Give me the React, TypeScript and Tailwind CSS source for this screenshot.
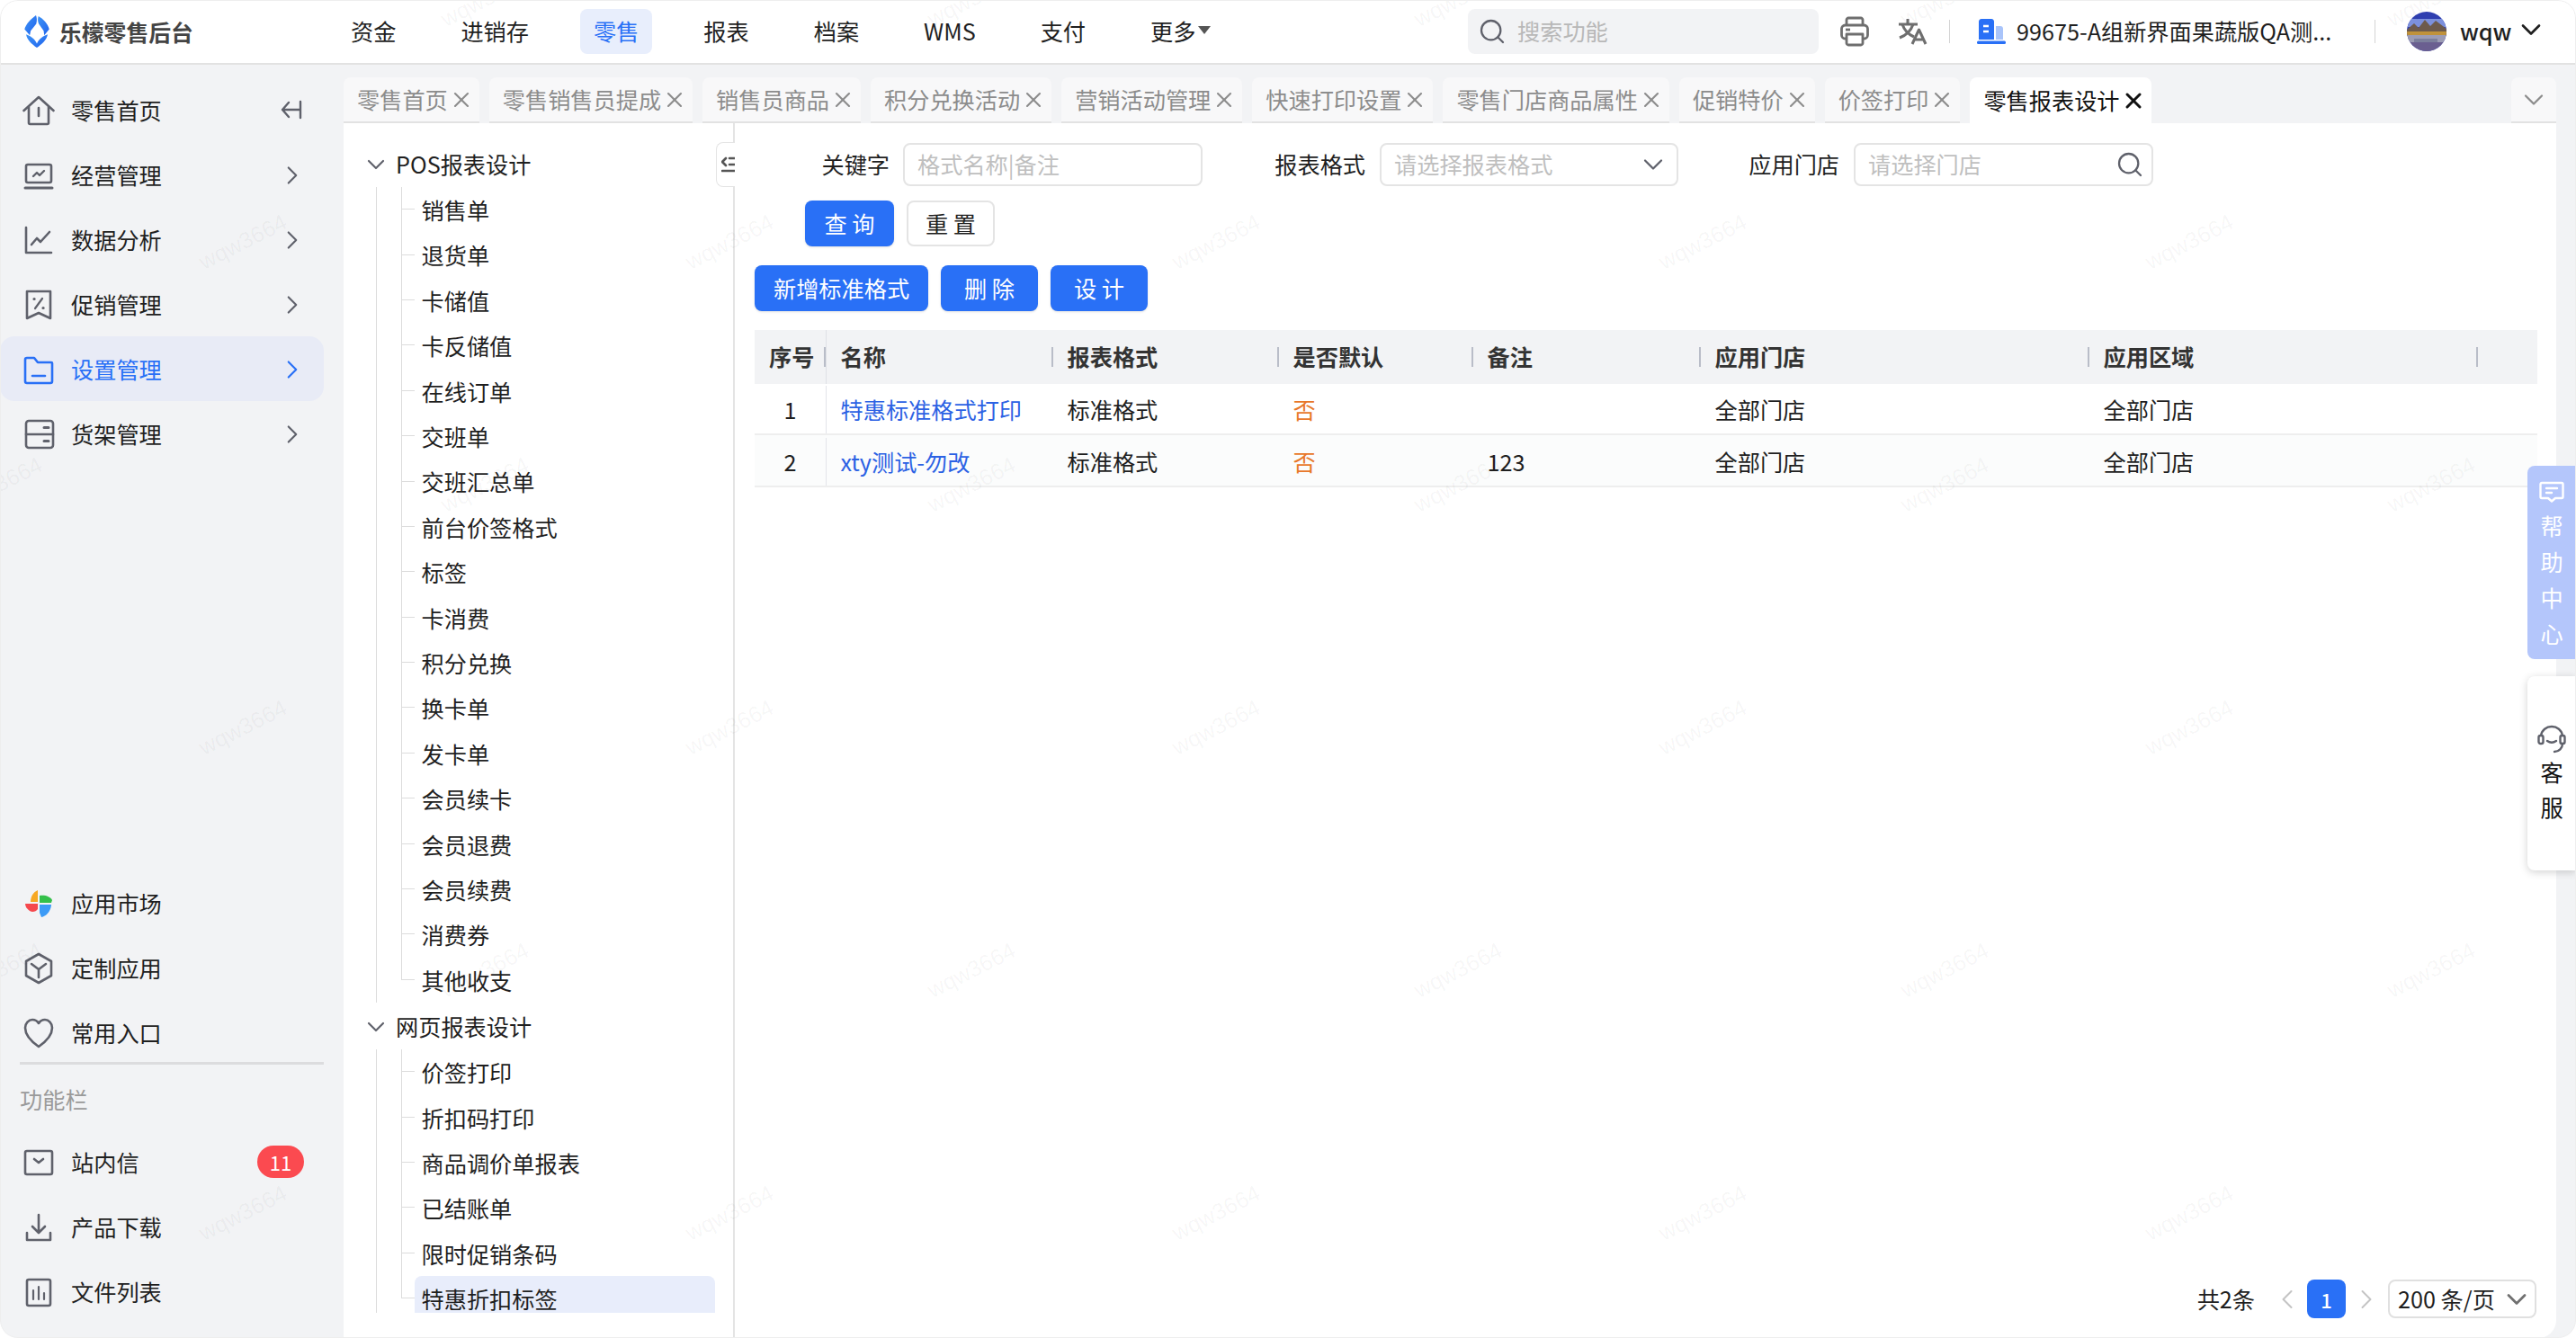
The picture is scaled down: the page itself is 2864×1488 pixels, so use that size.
import React from "react";
import { ChevronDown, ChevronLeft, ChevronRight, Search, X } from "lucide-react";

const tabs = [
  "零售首页",
  "零售销售员提成",
  "销售员商品",
  "积分兑换活动",
  "营销活动管理",
  "快速打印设置",
  "零售门店商品属性",
  "促销特价",
  "价签打印",
];

const posItems = [
  "销售单", "退货单", "卡储值", "卡反储值", "在线订单", "交班单", "交班汇总单", "前台价签格式", "标签",
  "卡消费", "积分兑换", "换卡单", "发卡单", "会员续卡", "会员退费", "会员续费", "消费券", "其他收支",
];
const webItems = ["价签打印", "折扣码打印", "商品调价单报表", "已结账单", "限时促销条码", "特惠折扣标签"];

const navItems = ["资金", "进销存", "零售", "报表", "档案", "WMS", "支付"];

const columns = ["名称", "报表格式", "是否默认", "备注", "应用门店", "应用区域", ""];
const rows = [
  { no: "1", name: "特惠标准格式打印", format: "标准格式", isDefault: "否", remark: "", store: "全部门店", area: "全部门店" },
  { no: "2", name: "xty测试-勿改", format: "标准格式", isDefault: "否", remark: "123", store: "全部门店", area: "全部门店" },
];

const grid = "grid grid-cols-[80px_252px_251px_216px_253px_432px_432px_66px]";

function Ico({ color = "#5f616b", children }: { color?: string; children: React.ReactNode }) {
  return (
    <svg width="36" height="36" viewBox="0 0 36 36" fill="none" stroke={color} strokeWidth="2.6" strokeLinecap="round" strokeLinejoin="round" className="shrink-0">
      {children}
    </svg>
  );
}

const HomeIcon = () => (
  <Ico>
    <path d="M1.5 18 18 3l16.5 15" />
    <path d="M7 14v17.5c0 .8.7 1.5 1.5 1.5h19c.8 0 1.500-.7 1.500-1.500V14" />
    <path d="M18 15v9" />
  </Ico>
);
const MonitorIcon = () => (
  <Ico>
    <rect x="4" y="6" width="28" height="20" rx="2" />
    <path d="M3 32h30" strokeWidth="3" />
    <path d="m12 19 4-4 3 3 5-5" strokeWidth="2.4" />
  </Ico>
);
const ChartIcon = () => (
  <Ico>
    <path d="M4 4v28h28" />
    <path d="m10 23 6-7 4 4 10-11" />
  </Ico>
);
const PromoIcon = () => (
  <Ico>
    <path d="M5 3h26v30l-13-6-13 6z" />
    <path d="m22 11-8 11" strokeWidth="2.200" />
    <path d="M13 11.500h.1M23 21.500h.1" strokeWidth="3.200" />
  </Ico>
);
const FolderIcon = () => (
  <Ico color="#2970f6">
    <path d="M3 7c0-1 .8-2 2-2h8l4 5h15c.6 0 1 .5 1 1v20c0 1-.8 2-2 2H5c-1.200 0-2-.8-2-2z" />
    <path d="M11 25h14" />
  </Ico>
);
const ShelfIcon = () => (
  <Ico>
    <rect x="4" y="3" width="30" height="30" rx="3" />
    <path d="M4 18h30" />
    <path d="M24 10.500h5M24 25.500h5" strokeWidth="3" />
  </Ico>
);
const MarketIcon = () => (
  <svg width="32" height="32" viewBox="0 0 32 32" className="shrink-0">
    <path d="M15 1C10 3 7 8 7 14h8z" fill="#f7a823" />
    <path d="M17 7c6-1 12 1 14 5l-1 3H17z" fill="#34c04a" />
    <path d="M1 16h14v6c-2 3-6 4-9 2-3-2-5-5-5-8z" fill="#f5484d" />
    <path d="M17 17h13c0 6-5 13-11 14l-2-5z" fill="#3d9bf6" />
  </svg>
);
const CubeIcon = () => (
  <Ico>
    <path d="M18 2 32 10v16l-14 8-14-8V10z" />
    <path d="m10 13 8 6 8-6M18 19v9" />
  </Ico>
);
const HeartIcon = () => (
  <Ico>
    <path d="M18 33C8 26 3 20 3 12c0-5 4-9 8-9 3 0 5.500 1.500 7 4 1.500-2.500 4-4 7-4 4 0 8 4 8 9 0 8-5 14-15 21z" />
  </Ico>
);
const InboxIcon = () => (
  <Ico>
    <rect x="3" y="5" width="30" height="26" rx="2" />
    <path d="m13 14 5 4 5-4" />
  </Ico>
);
const DownloadIcon = () => (
  <Ico>
    <path d="M18 4v19M11 17l7 7 7-7" />
    <path d="M5 24v8h26v-8" />
  </Ico>
);
const FileBarsIcon = () => (
  <Ico>
    <rect x="5" y="4" width="26" height="29" rx="2" />
    <path d="M12 16v10M18 12v14M24 19v7" strokeWidth="2.200" />
  </Ico>
);

const SideRow = ({ icon, label, arrow, active, badge }: { icon: React.ReactNode; label: string; arrow?: boolean; active?: boolean; badge?: string }) => (
  <div className={`h-[72px] w-[360px] flex items-center pl-[25px] pt-[2px] rounded-2xl ${active ? "bg-[#e8ebf6] text-[#2970f6]" : "text-[#1f1f1f]"}`}>
    {icon}
    <span className="ml-[18px]">{label}</span>
    {arrow && <ChevronRight className={`ml-auto mr-[18px] w-[34px] h-[34px] ${active ? "text-[#2970f6]" : "text-[#5f616b]"}`} strokeWidth={1.500} />}
    {badge && <span className="ml-auto mr-[22px] -mt-[2px] w-[52px] h-[36px] rounded-full bg-[#fb4a50] text-white text-[22px] flex items-center justify-center">{badge}</span>}
  </div>
);

function TreeGroup({ title, items, selected }: { title: string; items: string[]; selected?: string }) {
  return (
    <div>
      <div className="h-[50px] flex items-center pl-[20px] mt-[2px]">
        <ChevronDown className="w-[32px] h-[32px] text-[#5f616b]" strokeWidth={1.600} />
        <span className="ml-[6px]">{title}</span>
      </div>
      <div className="ml-[36px] pl-[27px] border-l border-[#dcdcdc]">
        {items.map((t, i) => (
          <div key={t} className="h-[50.4px] flex items-stretch">
            <div className="w-[15px] flex flex-col shrink-0">
              <div className="h-1/2 border-l border-b border-[#dcdcdc]" />
              {i < items.length - 1 && <div className="h-1/2 border-l border-[#dcdcdc]" />}
            </div>
            <div className={`w-[334px] pl-[7.500px] pt-[1px] rounded-t-lg flex items-center ${t === selected ? "bg-[#e8edfb]" : ""}`}>{t}</div>
          </div>
        ))}
      </div>
    </div>
  );
}

function Field({ label, labelW, gap, inputW, placeholder, right }: { label: string; labelW: string; gap: string; inputW: string; placeholder: string; right?: React.ReactNode }) {
  return (
    <div className="flex items-center">
      <span className={`${labelW} text-right`}>{label}</span>
      <div className={`${gap} ${inputW} h-[48px] border-2 border-[#e4e4e4] rounded-lg flex items-center pl-[14px] pr-[8px] text-[#bfbfbf]`}>
        <span>{placeholder}</span>
        {right}
      </div>
    </div>
  );
}

const Logo = () => (
  <svg width="28" height="36" viewBox="0 0 80 105" className="shrink-0">
    <defs>
      <linearGradient id="lg1" x1="0" y1="0" x2="1" y2="1">
        <stop offset="0" stopColor="#3f94f5" />
        <stop offset="1" stopColor="#1f63ee" />
      </linearGradient>
    </defs>
    <path d="M37 0C20 12 4 30 0 45l17 20 3-15 18-22c3-12 2-20-1-28z" fill="url(#lg1)" />
    <path d="M45 3c-3 9-2 17 1 25l16 22 2 15 16-20C76 28 60 11 45 3z" fill="url(#lg1)" />
    <path d="M5 62c3 18 20 33 35 43 15-10 32-25 35-43-14 5-28 14-35 30-7-16-21-25-35-30z" fill="url(#lg1)" />
  </svg>
);

const Avatar = () => (
  <svg width="44" height="44" viewBox="0 0 44 44" className="shrink-0 rounded-full">
    <rect width="44" height="44" fill="#2f3fb0" />
    <rect y="8" width="44" height="9" fill="#7c90dc" />
    <path d="M0 20 8 13l5 5 7-9 6 7 6-6 12 9v8H0z" fill="#6d5a4c" />
    <rect y="22" width="44" height="4" fill="#c0923a" />
    <rect y="26" width="44" height="8" fill="#9c9cb4" />
    <rect y="30" x="8" width="26" height="4" fill="#7b7f9c" />
    <rect y="34" width="44" height="10" fill="#6a5f90" />
  </svg>
);

export default function App() {
  const wm: { x: number; y: number }[] = [];
  [-2, 268, 538, 808, 1078, 1348].forEach((y, r) => {
    for (let k = 0; k < 6; k++) wm.push({ x: (r % 2 === 0 ? -3 : 269) + 541 * k, y });
  });

  return (
    <div className="relative w-[2864px] h-[1488px] overflow-hidden rounded-[20px] bg-[#f2f3f5] flex flex-col text-[25.2px] leading-none text-[#1f1f1f] font-['Noto_Sans_CJK_SC',sans-serif]">
      {/* top bar */}
      <header className="h-[72px] shrink-0 bg-white border-b-2 border-[#e2e2e2] flex items-center">
        <div className="ml-[27px] flex items-center">
          <Logo />
          <span className="ml-[11px] w-[150px] text-[24.8px] font-bold text-[#444444] whitespace-nowrap">乐檬零售后台</span>
        </div>
        <nav className="ml-[159px] flex items-center gap-[42px]">
          {navItems.map((n) => (
            <div key={n} className={`h-[50px] px-[15px] rounded-lg flex items-center ${n === "零售" ? "bg-[#e8eefc] text-[#2970f6]" : ""}`}>
              {n}
            </div>
          ))}
          <div className="h-[50px] px-[15px] flex items-center">
            更多
            <svg width="14" height="10" viewBox="0 0 14 10" className="ml-[3px] -mt-[4px]">
              <path d="M0 1h14L7 10z" fill="#555555" />
            </svg>
          </div>
        </nav>
        <div className="ml-auto pr-[32px] flex items-center">
          <div className="w-[390px] h-[50px] rounded-lg bg-[#f2f3f5] flex items-center pl-[11px] text-[#b8b8b8]">
            <Search className="w-[32px] h-[32px] text-[#5f616b]" strokeWidth={1.700} />
            <span className="ml-[12px]">搜索功能</span>
          </div>
          <svg width="32" height="34" viewBox="0 0 32 34" fill="none" stroke="#6e6e6e" strokeWidth="2.800" strokeLinejoin="round" className="ml-[24px]">
            <path d="M7 10V4c0-1 1-2 2-2h14c1 0 2 1 2 2v6" />
            <rect x="1.500" y="10" width="29" height="15" rx="4" />
            <path d="M7 20h18v10c0 1-1 2-2 2H9c-1 0-2-1-2-2z" fill="#ffffff" />
            <path d="M6 15h5" />
          </svg>
          <svg width="32" height="30" viewBox="0 0 32 30" fill="none" stroke="#6e6e6e" strokeWidth="3" strokeLinejoin="round" className="ml-[33px]">
            <path d="M0 7h21M10 1v6" />
            <path d="M4 7c2 6 6 11 13 14M16 7c-2 6-7 12-15 15" />
            <path d="m15 29 7.500-16L30 29M17.500 24h10" />
          </svg>
          <span className="ml-[24px] w-[1px] h-[26px] bg-[#d4d4d4]" />
          <svg width="32" height="28" viewBox="0 0 32 28" className="ml-[30px]">
            <path d="M2 3c0-1.500 1-3 3-3h11c2 0 3 1.500 3 3v20H2z" fill="#2970f6" />
            <path d="M7 8h6M7 14h6" stroke="#ffffff" strokeWidth="2.400" />
            <path d="M21 8h5c2 0 3 1 3 3v12h-8z" fill="#a9c4fa" />
            <rect y="24.500" width="32" height="3.500" rx="1.500" fill="#2970f6" />
          </svg>
          <span className="ml-[12px] w-[347px] whitespace-nowrap">99675-A组新界面果蔬版QA测...</span>
          <span className="ml-[51px] w-[1px] h-[26px] bg-[#d4d4d4]" />
          <div className="ml-[35px]">
            <Avatar />
          </div>
          <span className="ml-[15px] w-[52px] font-medium">wqw</span>
          <ChevronDown className="ml-[9px] w-[36px] h-[36px] -mt-[4px]" strokeWidth={1.800} />
        </div>
      </header>

      <div className="flex flex-1 min-h-0">
        {/* side menu */}
        <aside className="w-[382px] shrink-0 flex flex-col pt-[14px] pb-[16px]">
          <div className="relative">
            <SideRow icon={<HomeIcon />} label="零售首页" />
            <svg width="24" height="22" viewBox="0 0 24 22" fill="none" stroke="#5f616b" strokeWidth="2.400" strokeLinecap="round" strokeLinejoin="round" className="absolute left-[312px] top-[25px]">
              <path d="M9 3 2 11l7 8M2 11h20M22 2v18" />
            </svg>
          </div>
          <SideRow icon={<MonitorIcon />} label="经营管理" arrow />
          <SideRow icon={<ChartIcon />} label="数据分析" arrow />
          <SideRow icon={<PromoIcon />} label="促销管理" arrow />
          <SideRow icon={<FolderIcon />} label="设置管理" arrow active />
          <SideRow icon={<ShelfIcon />} label="货架管理" arrow />
          <div className="mt-auto">
            <SideRow icon={<span className="w-[36px] flex justify-center"><MarketIcon /></span>} label="应用市场" />
            <SideRow icon={<CubeIcon />} label="定制应用" />
            <SideRow icon={<HeartIcon />} label="常用入口" />
            <div className="-mt-[3px] ml-[22px] w-[338px] h-[3px] bg-[#dcdcde]" />
            <div className="h-[72px] pl-[22px] pt-[5px] flex items-center text-[#9a9a9a]">功能栏</div>
            <SideRow icon={<InboxIcon />} label="站内信" badge="11" />
            <SideRow icon={<DownloadIcon />} label="产品下载" />
            <SideRow icon={<FileBarsIcon />} label="文件列表" />
          </div>
        </aside>

        <div className="flex-1 min-w-0 flex flex-col pr-[22px]">
          {/* tabs */}
          <div className="h-[65px] shrink-0 pt-[14px] flex gap-[11px]">
            {tabs.map((t) => (
              <div key={t} className="h-[51px] bg-[#f8f8f9] border-b-2 border-[#e2e2e2] rounded-t-lg pl-[15px] pr-[6px] flex items-center text-[#8c8c8c]">
                <span className="whitespace-nowrap">{t}</span>
                <X className="ml-[1px] w-[28px] h-[28px] text-[#8c8c8c]" strokeWidth={1.800} />
              </div>
            ))}
            <div className="h-[51px] bg-white rounded-t-lg pl-[15px] pr-[6px] flex items-center text-[#111111]">
              <span className="whitespace-nowrap">零售报表设计</span>
              <X className="ml-[1px] w-[28px] h-[28px]" strokeWidth={2.600} />
            </div>
            <div className="ml-auto w-[50px] h-[51px] bg-[#f8f8f9] border-b-2 border-[#e2e2e2] rounded-t-lg flex items-center justify-center">
              <ChevronDown className="w-[36px] h-[36px] text-[#8c8c8c]" strokeWidth={1.500} />
            </div>
          </div>

          <div className="flex-1 min-h-0 flex bg-white rounded-br-[20px]">
            {/* report tree */}
            <div className="relative w-[435px] shrink-0 border-r-2 border-[#e4e4e4]">
              <div className="h-[1323px] overflow-hidden pt-[19px] text-[#1f1f1f]">
                <TreeGroup title="POS报表设计" items={posItems} />
                <TreeGroup title="网页报表设计" items={webItems} selected="特惠折扣标签" />
              </div>
              <div className="absolute right-[-2px] top-[21px] w-[21px] h-[50px] bg-white border border-r-0 border-[#e4e4e4] rounded-l-lg flex items-center justify-end">
                <svg width="15" height="18" viewBox="0 0 15 18" fill="none" stroke="#555555" strokeWidth="2.600" strokeLinecap="round" strokeLinejoin="round">
                  <path d="M5 2 1 6l4 4M9 2h6M9 9h6M1 16h14" />
                </svg>
              </div>
            </div>

            {/* report list */}
            <div className="flex-1 min-w-0 flex flex-col pt-[22px] pb-[22px] pr-[22px]">
              <div className="flex">
                <Field label="关键字" labelW="w-[172px]" gap="ml-[15px]" inputW="w-[333px]" placeholder="格式名称|备注" />
                <Field
                  label="报表格式"
                  labelW="w-[181px]"
                  gap="ml-[16px]"
                  inputW="w-[332px]"
                  placeholder="请选择报表格式"
                  right={<ChevronDown className="ml-auto w-[36px] h-[36px] text-[#5f616b]" strokeWidth={1.500} />}
                />
                <Field
                  label="应用门店"
                  labelW="w-[179px]"
                  gap="ml-[16px]"
                  inputW="w-[333px]"
                  placeholder="请选择门店"
                  right={<Search className="ml-auto w-[32px] h-[32px] text-[#5f616b]" strokeWidth={1.700} />}
                />
              </div>
              <div className="mt-[16px] ml-[78px] flex gap-[14px]">
                <div className="w-[99px] h-[51px] rounded-lg bg-[#2970f6] text-white flex items-center justify-center shadow-sm">查 询</div>
                <div className="w-[98px] h-[51px] rounded-lg bg-white border-2 border-[#e4e4e4] flex items-center justify-center">重 置</div>
              </div>
              <div className="mt-[21px] ml-[22px] flex gap-[14px] text-white">
                <div className="w-[193px] h-[51px] rounded-lg bg-[#2970f6] flex items-center justify-center shadow-sm">新增标准格式</div>
                <div className="w-[108px] h-[51px] rounded-lg bg-[#2970f6] flex items-center justify-center shadow-sm">删 除</div>
                <div className="w-[108px] h-[51px] rounded-lg bg-[#2970f6] flex items-center justify-center shadow-sm">设 计</div>
              </div>

              <div className="mt-[21px] ml-[22px] w-[1982px]">
                <div className={`${grid} h-[60px] bg-[#f2f3f5] font-bold text-[#333333]`}>
                  <div className="flex items-center justify-between pl-[16px] border-r border-[#dfe1e6]">
                    序号
                    <span className="w-[2px] h-[22px] bg-[#b9bdc8]" />
                  </div>
                  {columns.map((c, i) => (
                    <div key={i} className="flex items-center justify-between pl-[15.500px]">
                      {c}
                      <span className={`w-[2px] h-[22px] bg-[#b9bdc8] ${i === 6 ? "hidden" : ""}`} />
                    </div>
                  ))}
                </div>
                {rows.map((r, i) => (
                  <div key={r.no} className={`${grid} ${i === 0 ? "h-[57px] pt-[2px]" : "h-[58px] pt-[3px] bg-[#fbfcfc]"} border-b-2 border-[#eeeeee]`}>
                    <div className="flex items-center justify-center border-r border-[#e3e5ea]">{r.no}</div>
                    <div className="flex items-center pl-[15.500px] text-[#2c62e4]">{r.name}</div>
                    <div className="flex items-center pl-[15.500px]">{r.format}</div>
                    <div className="flex items-center pl-[15.500px] text-[#e8782a]">{r.isDefault}</div>
                    <div className="flex items-center pl-[15.500px]">{r.remark}</div>
                    <div className="flex items-center pl-[15.500px]">{r.store}</div>
                    <div className="flex items-center pl-[15.500px]">{r.area}</div>
                    <div />
                  </div>
                ))}
              </div>

              <div className="mt-auto flex items-center justify-end">
                <span className="whitespace-nowrap">共2条</span>
                <ChevronLeft className="ml-[18px] w-[36px] h-[36px] text-[#c4c4c4]" strokeWidth={1.300} />
                <div className="ml-[4px] w-[43px] h-[43px] rounded-lg bg-[#2970f6] text-white text-[22px] font-medium flex items-center justify-center">1</div>
                <ChevronRight className="ml-[5px] w-[36px] h-[36px] text-[#c4c4c4]" strokeWidth={1.300} />
                <div className="ml-[6px] w-[165px] h-[43px] rounded-lg border-2 border-[#e0e0e0] flex items-center pl-[9px] pr-[2px] whitespace-nowrap">
                  200 条/页
                  <ChevronDown className="ml-auto w-[36px] h-[36px] text-[#707070]" strokeWidth={1.800} />
                </div>
              </div>
            </div>
          </div>
        </div>
      </div>

      {/* floating help buttons */}
      <div className="absolute right-0 top-[518px] w-[54px] h-[215px] rounded-l-lg bg-[#b4c6fb] text-white flex flex-col items-center pt-[17px]">
        <svg width="28" height="24" viewBox="0 0 28 24" fill="none" stroke="#ffffff" strokeWidth="2.400" strokeLinejoin="round" strokeLinecap="round">
          <path d="M3 2h22c.8 0 1.500.7 1.500 1.500v14c0 .8-.7 1.500-1.500 1.500h-7l-4 3.500-4-3.500H3c-.8 0-1.500-.7-1.500-1.500v-14C1.500 2.700 2.200 2 3 2z" />
          <path d="M8 8h12M8 13h6" />
        </svg>
        <div className="mt-[13px] flex flex-col gap-[14.800px]">
          <span>帮</span>
          <span>助</span>
          <span>中</span>
          <span>心</span>
        </div>
      </div>
      <div className="absolute right-0 top-[752px] w-[54px] h-[216px] rounded-l-lg bg-white shadow-[0_2px_10px_rgba(0,0,0,0.18)] flex flex-col items-center pt-[54px]">
        <svg width="32" height="32" viewBox="0 0 32 32" fill="none" stroke="#5f616b" strokeWidth="2.400" strokeLinecap="round">
          <path d="M4 12C5 6 10 2 16 2s11 4 12 10" />
          <rect x="1.500" y="12" width="5" height="9" rx="2" />
          <rect x="25.500" y="12" width="5" height="9" rx="2" />
          <path d="M28 21c0 5-4 9-9 9" />
          <path d="M11 18c3 2 7 2 10 0" />
        </svg>
        <div className="mt-[8px] flex flex-col gap-[13.800px] text-[#111111]">
          <span>客</span>
          <span>服</span>
        </div>
      </div>

      {/* watermark */}
      <div className="absolute inset-0 overflow-hidden pointer-events-none rounded-[20px] border border-[#eeeeee]">
        {wm.map((p) => (
          <span
            key={`${p.x}-${p.y}`}
            className="absolute -translate-x-1/2 -translate-y-1/2 rotate-[-27deg] whitespace-nowrap text-[25px] text-black/[0.045] font-['Liberation_Sans',sans-serif]"
            style={{ left: p.x, top: p.y }}
          >
            wqw3664
          </span>
        ))}
      </div>
    </div>
  );
}
